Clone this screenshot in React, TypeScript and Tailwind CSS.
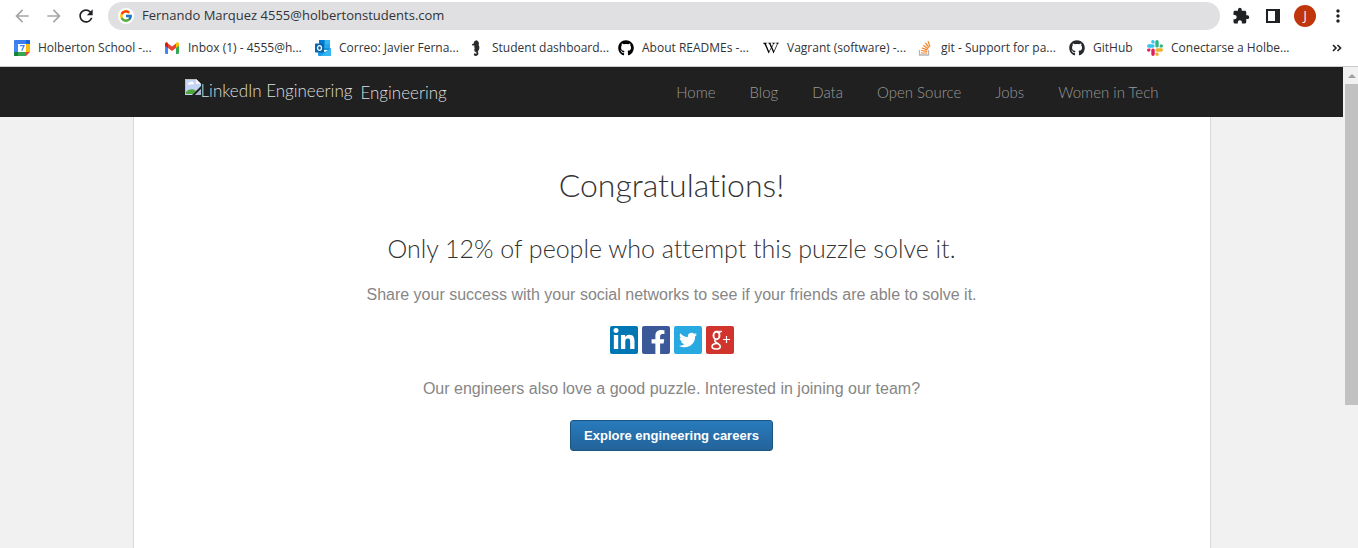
import type { ReactNode } from 'react';
import { FcGoogle } from 'react-icons/fc';
import { FaFacebookF, FaGithub, FaLinkedinIn, FaTwitter, FaWikipediaW } from 'react-icons/fa';
import { MdArrowBack, MdArrowForward, MdExtension, MdMoreVert, MdRefresh } from 'react-icons/md';

function CalendarIcon() {
  return (
    <svg viewBox="0 0 16 16" className="size-4">
      <path d="M1 0h14a1 1 0 0 1 1 1v3H0V1a1 1 0 0 1 1-1z" fill="#3b7ded" />
      <path d="M0 4h4v12H1a1 1 0 0 1-1-1z" fill="#4285f4" />
      <path d="M12 4h4v8h-4z" fill="#fbbc04" />
      <path d="M0 12h12v4H1a1 1 0 0 1-1-1z" fill="#34a853" />
      <path d="M12 0h3a1 1 0 0 1 1 1v3h-4z" fill="#1967d2" />
      <path d="M0 12h4v4H1a1 1 0 0 1-1-1z" fill="#188038" />
      <path d="M12 12h4l-4 4z" fill="#ea4335" />
      <path d="M4 4h8v8H4z" fill="#fff" />
      <path d="M6 5.7h4L7.7 10.8" fill="none" stroke="#4285f4" strokeWidth="1.3" />
    </svg>
  );
}

function GmailIcon() {
  return (
    <svg viewBox="0 0 16 16" className="size-4">
      <path d="M1 5v8a1 1 0 0 0 1 1h2V7z" fill="#4285f4" />
      <path d="M12 7v7h2a1 1 0 0 0 1-1V5z" fill="#34a853" />
      <path d="M12 3.6V8l3-2.3V4c0-1.6-1.7-2-2.6-1.4z" fill="#fbbc04" />
      <path d="M4 8V3.6l4 3 4-3V8l-4 3z" fill="#ea4335" />
      <path d="M1 4v1.700L4 8V3.600l-.4-.9C2.700 2 1 2.400 1 4z" fill="#c5221f" />
    </svg>
  );
}

function OutlookIcon() {
  return (
    <svg viewBox="0 0 16 16" className="size-4">
      <path d="M5 0h9a1 1 0 0 1 1 1v9H4V1a1 1 0 0 1 1-1z" fill="#1490df" />
      <path d="M9.500 0H14a1 1 0 0 1 1 1v3H9.500z" fill="#35b8f1" />
      <path d="M4 0h5.500v4H4z" fill="#0078d4" />
      <path d="M9.500 4H15v4H9.500z" fill="#28a8ea" />
      <path d="M3 8l7 4 6-4v7a1 1 0 0 1-1 1H4a1 1 0 0 1-1-1z" fill="#1a9be8" />
      <path d="M16 8v7a1 1 0 0 1-1 1H6z" fill="#35b8f1" />
      <rect y="3.500" width="9" height="9" rx=".8" fill="#0a64ad" />
      <ellipse cx="4.500" cy="8" rx="2" ry="2.300" fill="none" stroke="#fff" strokeWidth="1.300" />
    </svg>
  );
}

function SeahorseIcon() {
  return (
    <svg viewBox="0 0 16 16" className="size-4" fill="#2b2b2b">
      <path d="M6.800.9 8.600.3l1.500 1 .9 1.900-.4 1.700.7 1.500v2.200l-.6 1.700-.9 1.300.6 1.400-.2 1.500-1.300 1.200-1.800.2-1.300-1 .2-1.300 1.300-.3.500.8.700-.4-.1-1.100-1.600-1-.6-1.700.5-1.600L6.200 7l.4-1.300L4.200 5.200l-.4-.9 2-.9L5.900 2z" />
    </svg>
  );
}

function StackOverflowIcon() {
  return (
    <svg viewBox="0 0 16 16" className="size-4" fill="none">
      <path d="M2.500 10v5h9v-5" stroke="#b5b5b5" strokeWidth="1.300" />
      <g stroke="#f48024" strokeWidth="1.200">
        <path d="M4 13h6M4.200 10.500l5.900.9M4.900 8l5.600 1.900M6.300 5.400l4.900 3.300M8.400 3l3.700 4.600M11 1.100l2 5.500" />
      </g>
    </svg>
  );
}

function SlackIcon() {
  return (
    <svg viewBox="0 0 16 16" className="size-4">
      <path d="M5.900 0a1.700 1.700 0 0 0 0 3.400h1.700V1.700A1.700 1.700 0 0 0 5.900 0zM1.700 4.300a1.700 1.700 0 0 0 0 3.400h4.200a1.700 1.700 0 0 0 0-3.400z" fill="#36c5f0" />
      <path d="M16 5.900a1.700 1.700 0 0 0-3.400 0v1.700h1.700A1.700 1.700 0 0 0 16 5.900zM11.700 1.700a1.700 1.700 0 0 0-3.400 0v4.200a1.700 1.700 0 0 0 3.400 0z" fill="#2eb67d" />
      <path d="M10.100 16a1.700 1.700 0 0 0 0-3.400H8.400v1.700A1.700 1.700 0 0 0 10.100 16zM14.300 11.700a1.700 1.700 0 0 0 0-3.400h-4.200a1.700 1.700 0 0 0 0 3.400z" fill="#ecb22e" />
      <path d="M0 10.100a1.700 1.700 0 0 0 3.400 0V8.400H1.700A1.700 1.700 0 0 0 0 10.100zM4.300 14.300a1.700 1.700 0 0 0 3.400 0v-4.200a1.700 1.700 0 0 0-3.400 0z" fill="#e01e5a" />
    </svg>
  );
}

function BrokenImageIcon() {
  return (
    <svg viewBox="0 0 16 16" className="size-4 shrink-0">
      <path d="M0 0h11l5 5v11H0z" fill="#c3d3f5" />
      <path d="M.5 15.500V.5H11l4.500 4.500" fill="none" stroke="#bdbdbd" />
      <path d="M11 0v5h5z" fill="#f4f4f4" />
      <path d="M3 5.500a1.500 1.500 0 0 1 2-2 2 2 0 0 1 3.500 2z" fill="#fff" />
      <path d="M1 15v-2c2-3 7-4 10-1l-3 3z" fill="#4fa83d" />
      <path d="M16 7v3l-6 6H7z" fill="#202020" />
      <path d="M16 11v5h-5z" fill="#a9b6c9" />
    </svg>
  );
}

const bookmarks: { label: string; width: string; icon: ReactNode }[] = [
  { label: 'Holberton School -...', width: 'w-[110px]', icon: <CalendarIcon /> },
  { label: 'Inbox (1) - 4555@h...', width: 'w-[111px]', icon: <GmailIcon /> },
  { label: 'Correo: Javier Ferna...', width: 'w-[113px]', icon: <OutlookIcon /> },
  { label: 'Student dashboard...', width: 'w-[110px]', icon: <SeahorseIcon /> },
  { label: 'About READMEs -...', width: 'w-[105px]', icon: <FaGithub className="size-4 text-black" /> },
  { label: 'Vagrant (software) -...', width: 'w-[114px]', icon: <FaWikipediaW className="size-4 text-black" /> },
  { label: 'git - Support for pa...', width: 'w-[112px]', icon: <StackOverflowIcon /> },
  { label: 'GitHub', width: 'w-[38px]', icon: <FaGithub className="size-4 text-[#24292e]" /> },
  { label: 'Conectarse a Holbe...', width: 'w-[112px]', icon: <SlackIcon /> },
];

function BrowserBar() {
  return (
    <div className="border-b border-[#c8cacc] bg-white font-['Open_Sans','Noto_Sans',sans-serif] text-[#303338]">
      <div className="flex h-8 items-center pr-[10px] pl-3">
        <div className="flex gap-3 text-[#a5a7aa]">
          <button aria-label="Back"><MdArrowBack className="size-5" /></button>
          <button aria-label="Forward"><MdArrowForward className="size-5" /></button>
          <button aria-label="Reload" className="text-[#202124]"><MdRefresh className="size-5" /></button>
        </div>
        <div className="ml-3 flex h-7 flex-1 items-center gap-2 rounded-full bg-[#e0e0e2] pl-[10px]">
          <span className="flex size-4 items-center justify-center rounded-full bg-white">
            <FcGoogle className="size-[14px]" />
          </span>
          <input
            aria-label="Address"
            className="min-w-0 flex-1 bg-transparent text-[13px] outline-none"
            defaultValue="Fernando Marquez 4555@holbertonstudents.com"
          />
        </div>
        <div className="ml-3 flex items-center text-[#202124]">
          <button aria-label="Extensions"><MdExtension className="size-[18px]" /></button>
          <button aria-label="Side panel" className="ml-4">
            <svg viewBox="0 0 14 14" className="size-[14px]">
              <path d="M0 0h14v14H0zM2 2v10h7V2z" fill="currentColor" fillRule="evenodd" />
            </svg>
          </button>
          <button aria-label="Profile" className="ml-[14px] flex size-[22px] items-center justify-center rounded-full bg-[#bf360c] text-xs text-white">
            J
          </button>
          <button aria-label="Menu" className="ml-3"><MdMoreVert className="size-5" /></button>
        </div>
      </div>
      <div className="flex h-[34px] items-start justify-between pr-4 pl-[14px]">
        <nav aria-label="Bookmarks" className="flex gap-4">
          {bookmarks.map((b) => (
            <a key={b.label} href="#" className="flex h-8 items-center gap-2">
              {b.icon}
              <span className={`${b.width} text-xs whitespace-nowrap`}>{b.label}</span>
            </a>
          ))}
        </nav>
        <button aria-label="More bookmarks" className="flex h-8 items-center">
          <svg viewBox="0 0 10 8" className="h-2 w-[10px]" fill="none" stroke="#202124" strokeWidth="1.600">
            <path d="M1 1l3 3-3 3M5.500 1l3 3-3 3" />
          </svg>
        </button>
      </div>
    </div>
  );
}

const links = ['Home', 'Blog', 'Data', 'Open Source', 'Jobs', 'Women in Tech'];

function SiteHeader() {
  return (
    <header className="h-[50px] bg-[#202020] px-[51px] font-['Lato',sans-serif] font-light">
      <div className="mx-auto flex h-full max-w-[1076px] items-center justify-between">
        <a href="#" className="ml-[51px] flex items-start gap-2 text-[17px] leading-6 whitespace-nowrap text-[#dedede]">
          <span className="flex">
            <BrokenImageIcon />
            <span>LinkedIn Engineering</span>
          </span>
          <span className="pt-[2px]">Engineering</span>
        </a>
        <nav className="mr-[51px] flex gap-[34px] pt-px text-[15px] whitespace-nowrap text-[#999]">
          {links.map((l) => (
            <a key={l} href="#">{l}</a>
          ))}
        </nav>
      </div>
    </header>
  );
}

function ShareLinks() {
  return (
    <div className="mt-[19px] flex justify-center gap-1 text-white">
      <a href="#" aria-label="LinkedIn" className="flex size-7 items-center justify-center rounded-xs bg-[#0077b5]">
        <FaLinkedinIn className="size-6" />
      </a>
      <a href="#" aria-label="Facebook" className="flex size-7 items-end justify-end overflow-hidden rounded-xs bg-[#3b5998] pr-1">
        <FaFacebookF className="h-6 w-4" />
      </a>
      <a href="#" aria-label="Twitter" className="flex size-7 items-center justify-center rounded-xs bg-[#29a9e1]">
        <FaTwitter className="size-[18px]" />
      </a>
      <a href="#" aria-label="Google Plus" className="flex size-7 items-center justify-center rounded-xs bg-[#d0342c]">
        <svg viewBox="0 0 28 28" className="size-7" fill="none" stroke="#fff">
          <ellipse cx="10.500" cy="9.500" rx="3" ry="3.800" strokeWidth="1.900" />
          <path d="M10.500 5.300h5.500l-1.500 1h-2" strokeWidth="1" />
          <path d="M9.500 13.300c-1.500 1.500-.5 2.500 1.500 3.700 2.500 1.400 3.700 2.500 3.200 4.200-.8 2.600-8 2.500-8.200-.4 0-2.200 2.200-3.400 5-3.300" strokeWidth="1.600" />
          <path d="M17 13.500h7M20.500 10v7" strokeWidth="1.200" />
        </svg>
      </a>
    </div>
  );
}

export default function App() {
  return (
    <div className="flex min-h-screen flex-col">
      <BrowserBar />
      <div className="flex flex-1">
        <div className="flex min-w-0 flex-1 flex-col bg-[#f1f1f1]">
          <SiteHeader />
          <main className="mx-auto w-full max-w-[1078px] flex-1 border-x border-[#d9d9d9] bg-white pt-[47px] pb-12 text-center font-['Liberation_Sans',Arial,sans-serif] text-base text-[#868686]">
            <h1 className="font-['Lato',sans-serif] text-[32px] leading-[42px] font-light text-[#333] [font-variant-ligatures:none]">
              Congratulations!
            </h1>
            <h2 className="mt-[26px] font-['Lato',sans-serif] text-[25px] leading-8 font-light text-[#333] [font-variant-ligatures:none]">
              Only 12% of people who attempt this puzzle solve it.
            </h2>
            <p className="mt-[19px] leading-6">Share your success with your social networks to see if your friends are able to solve it.</p>
            <ShareLinks />
            <p className="mt-[23px] leading-6">Our engineers also love a good puzzle. Interested in joining our team?</p>
            <button className="mt-[19px] h-[31px] rounded-[3px] border border-[#1b5480] bg-linear-to-b from-[#287bbc] to-[#23639a] px-[13px] text-[13px] font-bold text-white">
              Explore engineering careers
            </button>
          </main>
        </div>
        <div className="flex w-[15px] flex-col items-end bg-[#f1f1f1]">
          <button aria-label="Scroll up" className="flex h-[17px] w-[13px] items-center justify-center">
            <svg viewBox="0 0 8 4" className="h-1 w-2"><path d="M4 0l4 4H0z" fill="#a0a0a0" /></svg>
          </button>
          <div className="h-2/3 w-[13px] bg-[#c1c1c1]" />
        </div>
      </div>
    </div>
  );
}
